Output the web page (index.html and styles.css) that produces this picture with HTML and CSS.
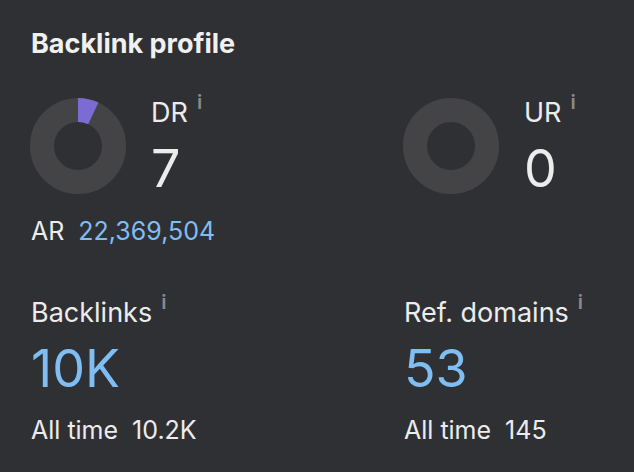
FILE: index.html
```html
<!DOCTYPE html>
<html lang="en">
  <head>
    <meta charset="UTF-8" />
    <meta name="viewport" content="width=device-width, initial-scale=1.0" />
    <title>Backlink profile</title>
    <link rel="stylesheet" href="styles.css">
  </head>
  <body>
    <div class="panel">
      <h1 class="title">Backlink profile</h1>

      <div class="grid">
        <div class="rating">
          <svg class="donut" width="96" height="96" viewBox="0 0 96 96">
            <circle cx="48" cy="48" r="36" fill="none" stroke="#444447" stroke-width="24" />
            <!-- DR 7 -> 7% of the ring, starting at 12 o'clock -->
            <circle cx="48" cy="48" r="36" fill="none" stroke="#7b6bd3" stroke-width="24"
              stroke-dasharray="15.83 226.19" transform="rotate(-90 48 48)" />
          </svg>
          <div class="rating-text">
            <div class="label">DR<span class="info">i</span></div>
            <div class="big">7</div>
          </div>
        </div>

        <div class="rating">
          <svg class="donut" width="96" height="96" viewBox="0 0 96 96">
            <circle cx="48" cy="48" r="36" fill="none" stroke="#444447" stroke-width="24" />
          </svg>
          <div class="rating-text">
            <div class="label">UR<span class="info">i</span></div>
            <div class="big">0</div>
          </div>
        </div>

        <div class="sub">
          <span>AR</span>
          <span class="link">22,369,504</span>
        </div>
        <div></div>

        <div class="metric">
          <div class="label">Backlinks<span class="info">i</span></div>
          <div class="big link">10K</div>
          <div class="sub">
            <span>All time</span>
            <span>10.2K</span>
          </div>
        </div>

        <div class="metric">
          <div class="label">Ref. domains<span class="info">i</span></div>
          <div class="big link">53</div>
          <div class="sub">
            <span>All time</span>
            <span>145</span>
          </div>
        </div>
      </div>
    </div>
  </body>
</html>
```

FILE: styles.css
```css
body {
  margin: 0;
  background-color: #2f3033;
  color: #ececec;
  font-family: Inter, "Noto Sans", sans-serif;
}
.panel {
  padding: 28px 0 0 31px;
}
.title {
  margin: 0;
  font-size: 27px;
  line-height: 32px;
  font-weight: 700;
  color: #f0f0f0;
}
.grid {
  display: grid;
  grid-template-columns: 373px 1fr;
  margin-top: 38px;
}
.rating {
  display: flex;
  gap: 25px;
  margin-left: -1px;
}
.donut {
  display: block;
}
.rating-text {
  display: flex;
  flex-direction: column;
  margin-top: -1px;
}
.label {
  font-size: 27px;
  line-height: 32px;
}
.info {
  font-size: 20px;
  font-weight: 600;
  line-height: 0;
  color: #8a8a8d;
  margin-left: 9px;
  vertical-align: 13px;
}
.big {
  font-size: 52px;
  line-height: 52px;
  margin-top: 14px;
}
.link {
  color: #80bdf3;
}
.sub {
  display: flex;
  gap: 14px;
  font-size: 25px;
  line-height: 32px;
}
.rating + .rating + .sub {
  margin-top: 20px;
}
.metric {
  margin-top: 50px;
}
.metric .sub {
  margin-top: 19px;
}
```
